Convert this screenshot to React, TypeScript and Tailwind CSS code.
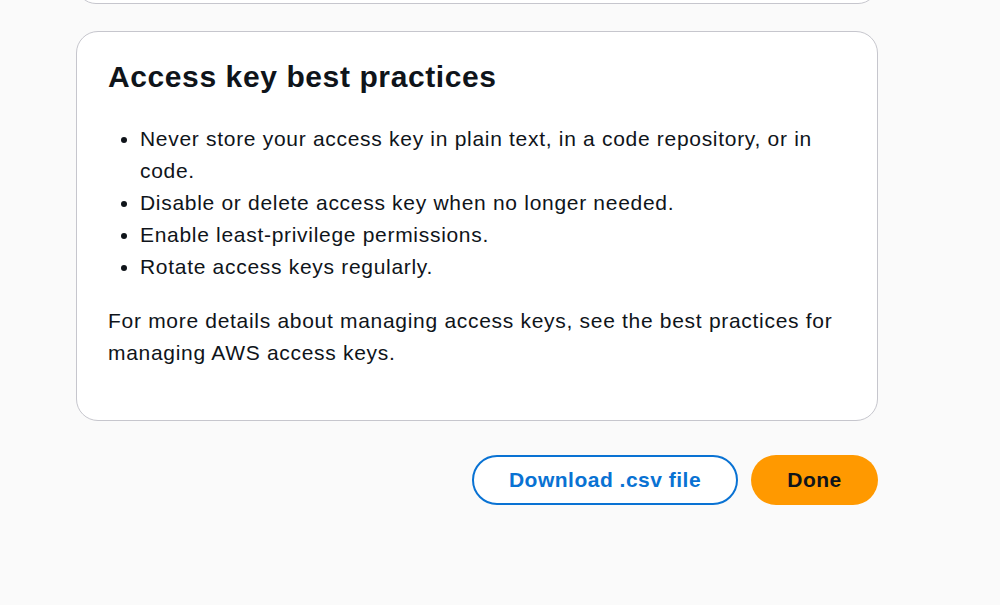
export default function App() {
  const tips = [
    "Never store your access key in plain text, in a code repository, or in code.",
    "Disable or delete access key when no longer needed.",
    "Enable least-privilege permissions.",
    "Rotate access keys regularly.",
  ];

  return (
    <div
      className="min-h-[605px] w-[1000px] bg-[#fafafa] text-[#0f141a]"
      style={{ fontFamily: "'Liberation Sans', Arial, sans-serif" }}
    >
      <div className="ml-[76px] w-[802px]">
        {/* bottom edge of the previous card */}
        <div className="h-[4px] overflow-hidden">
          <div className="-mt-[60px] h-[64px] rounded-[20px] border border-[#c6c6cd] bg-white" />
        </div>

        <section className="mt-[27px] rounded-[22px] border border-[#c6c6cd] bg-white pl-[31px] pr-[40px] pt-[27px] pb-[51px]">
          <h2 className="text-[30px] font-bold leading-[36px] tracking-[0.6px]">Access key best practices</h2>

          <ul className="mt-[28px] list-disc pl-[32px] text-[21px] leading-[32px] tracking-[0.7px]">
            {tips.map((t) => (
              <li key={t}>{t}</li>
            ))}
          </ul>

          <p className="mt-[22px] text-[21px] leading-[32px] tracking-[0.7px]">
            For more details about managing access keys, see the best practices for managing AWS access keys.
          </p>
        </section>

        <div className="mt-[34px] flex justify-end gap-[13px]">
          <button className="h-[50px] w-[266px] rounded-full border-2 border-[#0972d3] bg-white text-[21px] font-bold tracking-[0.5px] text-[#0972d3]">
            Download .csv file
          </button>
          <button className="h-[50px] w-[127px] rounded-full bg-[#ff9900] text-[21px] font-bold tracking-[0.5px] text-[#0f141a]">
            Done
          </button>
        </div>
      </div>
    </div>
  );
}
